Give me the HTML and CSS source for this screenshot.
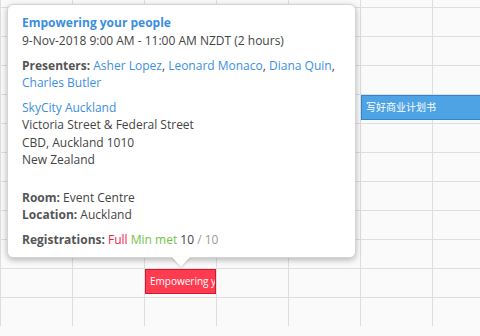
FILE: index.html
```html
<!DOCTYPE html>
<html lang="en">
<head>
<meta charset="UTF-8" />
<title>Calendar - event tooltip</title>
<link rel="stylesheet" href="styles.css">
</head>
<body>

<div class="calendario">
  <div class="grade" id="grade">
    <!-- cells generated via JS -->
  </div>

  <div class="evento azul">写好商业计划书</div>
  <div class="evento vermelho">Empowering your people</div>

  <div class="tooltip">
    <div class="titulo">Empowering your people</div>
    <div>9-Nov-2018 9:00 AM - 11:00 AM NZDT (2 hours)</div>

    <p><b>Presenters:</b> <a href="#">Asher Lopez</a>, <a href="#">Leonard Monaco</a>, <a href="#">Diana Quin</a>, <a href="#">Charles Butler</a></p>

    <p>
      <a href="#">SkyCity Auckland</a><br />
      Victoria Street &amp; Federal Street<br />
      CBD, Auckland 1010<br />
      New Zealand
    </p>

    <p class="sala">
      <b>Room:</b> Event Centre<br />
      <b>Location:</b> Auckland
    </p>

    <p><b>Registrations:</b> <span class="cheio">Full</span> <span class="minimo">Min met</span> 10 <span class="total">/ 10</span></p>

    <span class="seta"></span>
  </div>
</div>

<script>
  // 7 columns x 12 rows of empty calendar cells
  const grade = document.getElementById('grade');
  for (let i = 0; i < 7 * 12; i++) {
    const cel = document.createElement('div');
    cel.className = 'celula';
    grade.appendChild(cel);
  }
</script>

</body>
</html>
```

FILE: styles.css
```css
body {
  margin: 0;
  font-family: "Open Sans", Arial, sans-serif;
  background-color: #fafafa;
  overflow: hidden;
}
.calendario {
  position: relative;
  width: 480px;
  height: 336px;
  overflow: hidden;
}
.grade {
  display: grid;
  grid-template-columns: repeat(7, 72px);
  grid-auto-rows: 29px;
  margin-top: -22px;
}
.celula {
  border-left: 1px solid #dedede;
  border-top: 1px solid #dedede;
}
.evento {
  position: absolute;
  box-sizing: border-box;
  height: 25px;
  padding: 0 4px;
  color: #fff;
  font-size: 10px;
  line-height: 23px;
  white-space: nowrap;
  overflow: hidden;
}
.azul {
  left: 361px;
  top: 95px;
  width: 130px;
  background-color: #4ea3e5;
  border: 1px solid #2f86d4;
  font-family: "Open Sans", "Noto Sans CJK SC", sans-serif;
}
.vermelho {
  left: 145px;
  top: 269px;
  width: 71px;
  background-color: #ff3b50;
  border: 1px solid #d8152e;
}
.tooltip {
  position: absolute;
  left: 7px;
  top: 4px;
  width: 349px;
  height: 254px;
  box-sizing: border-box;
  padding: 8px 14px;
  background-color: #fff;
  border: 1px solid #d4d4d4;
  border-radius: 6px;
  box-shadow: 0 2px 6px rgba(0, 0, 0, 0.28);
  color: #444;
  font-size: 12px;
  line-height: 17.5px;
}
.tooltip p {
  margin: 7px 0 0;
}
.tooltip .sala {
  margin-top: 20px;
}
.tooltip a {
  color: #3d8fe0;
  text-decoration: none;
}
.tooltip b {
  color: #555;
}
.titulo {
  color: #3a8ee2;
  font-weight: bold;
  line-height: 19px;
}
.cheio {
  color: #ee1d4a;
}
.minimo {
  color: #72c34a;
}
.total {
  color: #9a9a9a;
}
.seta {
  position: absolute;
  left: 164px;
  bottom: -10px;
  width: 0;
  height: 0;
  border-left: 9px solid transparent;
  border-right: 9px solid transparent;
  border-top: 10px solid #fff;
  filter: drop-shadow(0 1px 1px rgba(0, 0, 0, 0.2));
}
```
